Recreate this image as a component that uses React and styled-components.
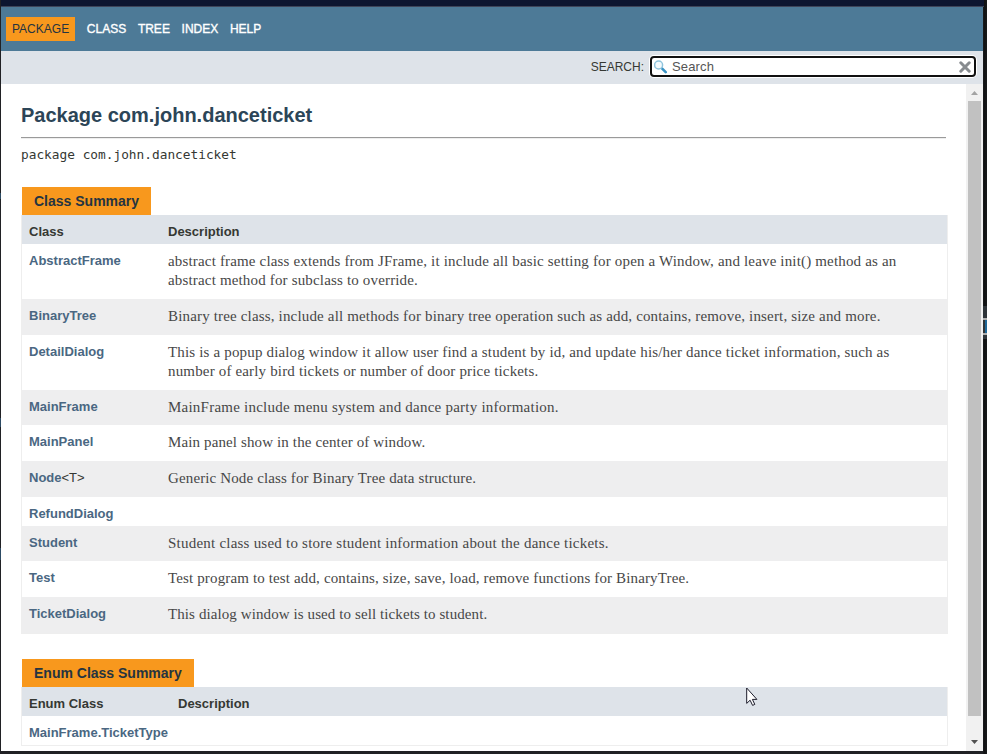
import React from 'react';
import styled, { createGlobalStyle } from 'styled-components';

const GlobalStyle = createGlobalStyle`
  * { box-sizing: border-box; }
  body {
    margin: 0;
    overflow: hidden;
    background: #18191b;
    color: #353833;
    font-family: "Liberation Sans", Arial, sans-serif;
  }
`;

/* The dark backdrop shows slivers of the windows behind at both edges. */
const Desktop = styled.div`
  width: 987px;
  height: 754px;
  padding: 0 4px 3px 1px;
  display: flex;
  flex-direction: column;
  background:
    linear-gradient(#1f6797, #1f6797) 985px 320px / 2px 13px no-repeat,
    linear-gradient(#b0b0b0, #b0b0b0) 983px 318px / 4px 2px no-repeat,
    linear-gradient(#b0b0b0, #b0b0b0) 983px 333px / 4px 2px no-repeat,
    linear-gradient(#2e3439, #2e3439) 983px 306px / 4px 33px no-repeat,
    linear-gradient(#2c4a63, #2c4a63) 0 193px / 1px 6px no-repeat,
    linear-gradient(#2c4a63, #2c4a63) 0 418px / 1px 9px no-repeat,
    linear-gradient(#2c4a63, #2c4a63) 0 548px / 1px 12px no-repeat,
    linear-gradient(90deg, #202124 0 983px, #0f1011 984px, #17191a 987px);
`;

const WindowEdge = styled.div`
  flex: none;
  height: 7px;
  margin-right: -1px;
  background: #0d1630;
  border-bottom: 1px solid #3e4559;
`;

const TopNav = styled.nav`
  flex: none;
  height: 44px;
  display: flex;
  align-items: flex-start;
  gap: 11.7px;
  padding: 10px 5px;
  background: #4d7a97;
  font-size: 12px;
`;

const ActiveItem = styled.span`
  height: 24px;
  padding: 0 6px;
  line-height: 24px;
  background: #f8981d;
  color: #253441;
`;

const NavLink = styled.a`
  line-height: 24px;
  color: #fff;
  -webkit-text-stroke: 0.35px #fff;
`;

const SubNav = styled.div`
  flex: none;
  height: 33px;
  display: flex;
  justify-content: flex-end;
  align-items: flex-start;
  padding: 5px 7px 0 0;
  background: #dee3e9;
`;

const SearchLabel = styled.label`
  margin-right: 6px;
  font-size: 12px;
  line-height: 22px;
`;

const SearchBox = styled.div`
  width: 326px;
  height: 21px;
  display: flex;
  align-items: center;
  padding: 0 3px 0 2px;
  border: 2px solid #101010;
  border-radius: 4px;
  background: #fff;
  box-shadow: 0 0 0 1px #fff;
  font-size: 13px;
  line-height: 17px;
  color: #555;
`;

const SearchText = styled.span`
  flex: 1;
  margin-left: 4px;
  letter-spacing: 0.15px;
`;

const Body = styled.div`
  flex: 1;
  min-height: 0;
  display: flex;
  background: #fff;
`;

const Main = styled.main`
  flex: 1;
  min-width: 0;
  overflow: hidden;
  padding: 0 18px 0 20px;
`;

const Title = styled.h1`
  height: 53px;
  width: 925px;
  margin: 0;
  padding-top: 19px;
  font-size: 20px;
  line-height: 24px;
  color: #2c4557;
`;

const Rule = styled.hr`
  width: 925px;
  height: 2px;
  margin: 0;
  border: 0;
  border-top: 1px solid #9a9a9a;
  border-bottom: 1px solid #eee;
`;

const Signature = styled.div`
  height: 48px;
  padding-top: 7px;
  font: 12.8px/18px "DejaVu Sans Mono", monospace;
`;

const Section = styled.section`
  margin-bottom: 25px;
`;

const Caption = styled.div`
  width: fit-content;
  height: 28px;
  margin-left: 1px;
  padding: 0 12px;
  background: #f8981d;
  font-size: 14px;
  font-weight: bold;
  line-height: 28px;
  color: #253441;
`;

const Table = styled.div`
  width: 927px;
  border: 1px solid #eee;
  border-top: 0;
`;

const Row = styled.div`
  display: grid;
  grid-template-columns: ${(p) => p.$first}px 1fr;
  height: ${(p) => p.$height}px;
  padding-left: 7px;
  background: ${(p) => (p.$shaded ? '#eeeeef' : '#fff')};
`;

const HeaderRow = styled(Row)`
  background: #dee3e9;
  font-size: 13px;
  font-weight: bold;
  line-height: 33px;
`;

const Name = styled.div`
  padding-top: 8px;
  font-size: 13px;
  line-height: 17px;
`;

const ClassLink = styled.a`
  font-weight: bold;
  color: #4a6782;
`;

const Description = styled.div`
  padding-top: 8px;
  font: 15px/19px "Liberation Serif", serif;
  letter-spacing: ${(p) => p.$tracking ?? 0.165}px;
  white-space: pre-line;
  color: #474747;
`;

const ScrollTrack = styled.div`
  width: 17px;
  display: flex;
  flex-direction: column;
  align-items: center;
  background: #f1f1f1;
`;

const ScrollThumb = styled.div`
  width: 13px;
  height: 615px;
  background: #c1c1c1;
`;

const ArrowBox = styled.div`
  height: 17px;
  width: 17px;
  display: flex;
  justify-content: center;
  align-items: center;
  margin-top: ${(p) => (p.$bottom ? 'auto' : 0)};
  padding-bottom: ${(p) => (p.$bottom ? 2 : 0)}px;
`;

const Pointer = styled.svg`
  position: absolute;
  left: 746px;
  top: 687px;
`;

const classes = [
  { name: 'AbstractFrame', height: 55, text: 'abstract frame class extends from JFrame, it include all basic setting for open a Window, and leave init() method as an\nabstract method for subclass to override.' },
  { name: 'BinaryTree', height: 36, text: 'Binary tree class, include all methods for binary tree operation such as add, contains, remove, insert, size and more.' },
  { name: 'DetailDialog', height: 55, text: 'This is a popup dialog window it allow user find a student by id, and update his/her dance ticket information, such as\nnumber of early bird tickets or number of door price tickets.' },
  { name: 'MainFrame', height: 35, tracking: 0.23, text: 'MainFrame include menu system and dance party information.' },
  { name: 'MainPanel', height: 36, tracking: 0.125, text: 'Main panel show in the center of window.' },
  { name: 'Node', suffix: '<T>', height: 36, tracking: 0.13, text: 'Generic Node class for Binary Tree data structure.' },
  { name: 'RefundDialog', height: 29, text: '' },
  { name: 'Student', height: 35, tracking: 0.225, text: 'Student class used to store student information about the dance tickets.' },
  { name: 'Test', height: 36, tracking: 0.14, text: 'Test program to test add, contains, size, save, load, remove functions for BinaryTree.' },
  { name: 'TicketDialog', height: 36, tracking: 0.095, text: 'This dialog window is used to sell tickets to student.' },
];

const enums = [{ name: 'MainFrame.TicketType', height: 29, text: '' }];

function Magnifier() {
  return (
    <svg width="14" height="14" viewBox="0 0 14 14" fill="none">
      <path d="M8.2 8.7 11.7 12.2" stroke="#3a93c4" strokeWidth="2.6" strokeLinecap="round" />
      <circle cx="4.6" cy="5" r="4" fill="#f3fafd" stroke="#8fc4dd" strokeWidth="1.5" />
    </svg>
  );
}

function ClearIcon() {
  return (
    <svg width="12" height="12" viewBox="0 0 12 12">
      <path d="M1.8 1.8 10.2 10.2M10.2 1.8 1.8 10.2" stroke="#878b8f" strokeWidth="3" strokeLinecap="round" />
    </svg>
  );
}

function Arrow({ down }) {
  return (
    <svg width="7" height="4" viewBox="0 0 7 4">
      <path d={down ? 'M0 0h7L3.5 4z' : 'M0 4h7L3.5 0z'} fill={down ? '#505050' : '#a3a3a3'} />
    </svg>
  );
}

function Summary({ title, heading, first, rows }) {
  return (
    <Section>
      <Caption>{title}</Caption>
      <Table>
        <HeaderRow $first={first} $height={29}>
          <span>{heading}</span>
          <span>Description</span>
        </HeaderRow>
        {rows.map((r, i) => (
          <Row key={r.name} $first={first} $height={r.height} $shaded={i % 2 === 1}>
            <Name>
              <ClassLink>{r.name}</ClassLink>
              {r.suffix}
            </Name>
            <Description $tracking={r.tracking}>{r.text}</Description>
          </Row>
        ))}
      </Table>
    </Section>
  );
}

export default function App() {
  return (
    <Desktop>
      <GlobalStyle />
      <WindowEdge />
      <TopNav>
        <ActiveItem>PACKAGE</ActiveItem>
        <NavLink>CLASS</NavLink>
        <NavLink>TREE</NavLink>
        <NavLink>INDEX</NavLink>
        <NavLink>HELP</NavLink>
      </TopNav>
      <SubNav>
        <SearchLabel>SEARCH:</SearchLabel>
        <SearchBox>
          <Magnifier />
          <SearchText>Search</SearchText>
          <ClearIcon />
        </SearchBox>
      </SubNav>
      <Body>
        <Main>
          <Title>Package com.john.danceticket</Title>
          <Rule />
          <Signature>package com.john.danceticket</Signature>
          <Summary title="Class Summary" heading="Class" first={139} rows={classes} />
          <Summary title="Enum Class Summary" heading="Enum Class" first={149} rows={enums} />
        </Main>
        <ScrollTrack>
          <ArrowBox>
            <Arrow />
          </ArrowBox>
          <ScrollThumb />
          <ArrowBox $bottom>
            <Arrow down />
          </ArrowBox>
        </ScrollTrack>
      </Body>
      <Pointer width="12" height="20" viewBox="0 0 12 20">
        <path d="M.7 1v15.4l3.4-3.2 2.5 5.2 2.2-1-2.4-5h4.5z" fill="#fff" stroke="#1c1c2b" strokeWidth="1" />
      </Pointer>
    </Desktop>
  );
}
